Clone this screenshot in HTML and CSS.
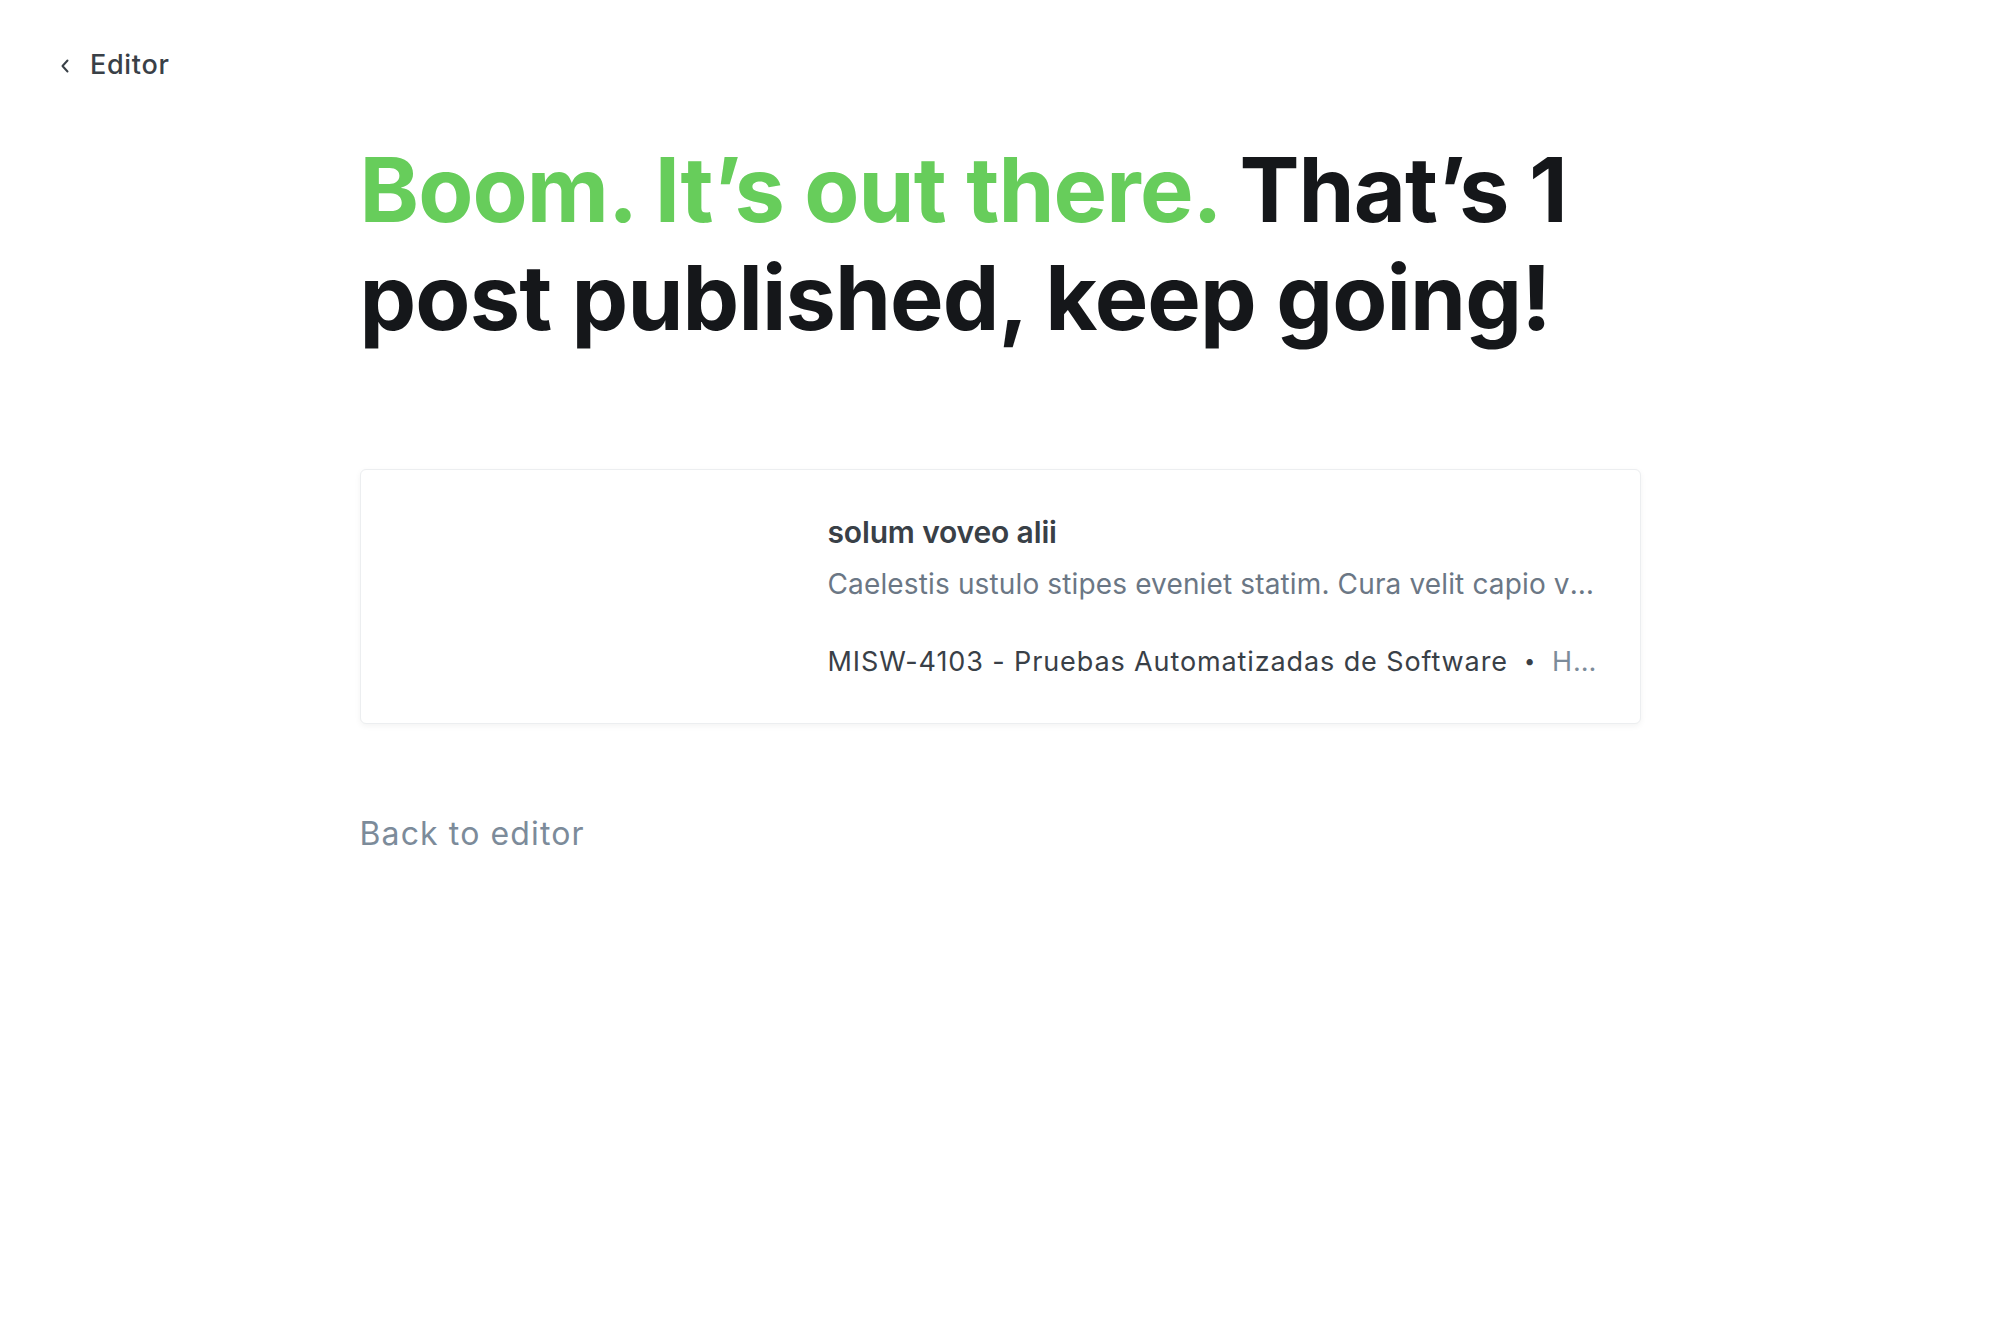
FILE: index.html
```html
<!DOCTYPE html>
<html lang="en">
<head>
<meta charset="utf-8">
<title>Published</title>
<link rel="stylesheet" href="styles.css">
</head>
<body>
<header class="topbar">
  <a class="back-link" href="#">
    <svg class="chev" width="10" height="16" viewBox="0 0 10 16" aria-hidden="true"><path d="M7.5 2.5 L2.5 8 L7.5 13.5" fill="none" stroke="#394047" stroke-width="2" stroke-linecap="round" stroke-linejoin="round"/></svg>
    <span>Editor</span>
  </a>
</header>
<main class="wrap">
  <h1 class="title"><span class="green">Boom. It’s out there.</span> That’s 1 post published, keep going!</h1>
  <div class="card">
    <div class="thumb"></div>
    <div class="content">
      <div class="card-title">solum voveo alii</div>
      <div class="excerpt">Caelestis ustulo stipes eveniet statim. Cura velit capio vinco tamen aegrotatio.</div>
      <div class="meta">
        <span class="pub">MISW-4103 - Pruebas Automatizadas de Software</span>
        <span class="dot">•</span>
        <span class="author">Hildegard Schmidt</span>
      </div>
    </div>
  </div>
  <a class="back-editor" href="#">Back to editor</a>
</main>
</body>
</html>
```
FILE: styles.css
```css
html, body {
  margin: 0;
  padding: 0;
  background: #ffffff;
  font-family: Inter, "Noto Sans", sans-serif;
  -webkit-font-smoothing: antialiased;
}
a { text-decoration: none; }

.topbar {
  padding: 48px 0 0 60px;
}
.back-link {
  display: inline-flex;
  align-items: center;
  gap: 20px;
  color: #394047;
  font-size: 27px;
  font-weight: 500;
  line-height: 33px;
  letter-spacing: 0.025em;
}
.chev { display: block; margin-top: 2px; }

.wrap {
  width: 1281px;
  margin: 0 auto;
}
.title {
  margin: 55px 0 0 0;
  font-size: 90px;
  line-height: 108px;
  font-weight: 700;
  letter-spacing: -0.01em;
  color: #15171a;
  width: 1250px;
}
.green { color: #67cd5b; }

.card {
  margin-top: 117px;
  display: flex;
  height: 255px;
  box-sizing: border-box;
  border: 1px solid #eceef0;
  border-radius: 6px;
  box-shadow: 0 2px 6px rgba(0,0,0,0.05);
  background: #fff;
}
.thumb {
  flex: 0 0 427px;
}
.content {
  flex: 1 1 auto;
  min-width: 0;
  padding: 43px 40px 0 40px;
}
.card-title {
  font-size: 30px;
  line-height: 39px;
  font-weight: 600;
  color: #394047;
  letter-spacing: -0.005em;
}
.excerpt {
  margin-top: 12px;
  font-size: 28px;
  line-height: 40px;
  color: #6b7785;
  letter-spacing: 0.005em;
  white-space: nowrap;
  overflow: hidden;
  text-overflow: ellipsis;
}
.meta {
  margin-top: 38px;
  display: flex;
  align-items: center;
  font-size: 27px;
  line-height: 39px;
  color: #394047;
  letter-spacing: 0.033em;
  white-space: nowrap;
}
.pub { flex: 0 0 auto; }
.dot { margin: 0 16px; font-size: 20px; }
.author {
  color: #7c8b9a;
  overflow: hidden;
  text-overflow: ellipsis;
  min-width: 0;
  max-width: 46px;
}
.back-editor {
  display: inline-block;
  margin-top: 90px;
  font-size: 32px;
  line-height: 39px;
  color: #7c8b9a;
  letter-spacing: 0.035em;
}
```
